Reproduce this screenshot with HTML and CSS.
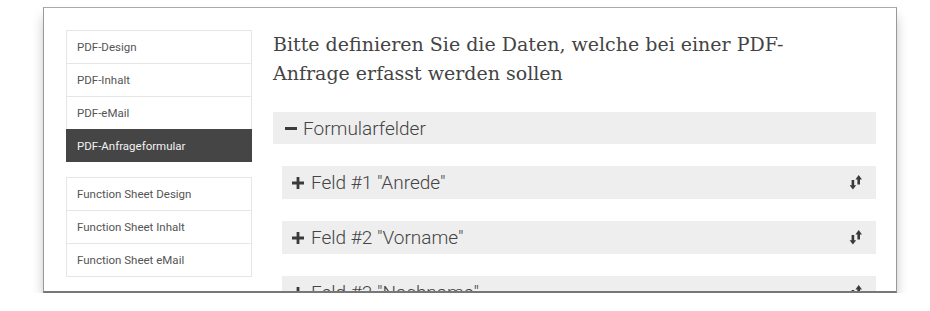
FILE: index.html
```html
<!DOCTYPE html>
<html lang="de">
<head>
    <meta charset="UTF-8">
    <title>PDF-Anfrageformular</title>
    <link rel="stylesheet" href="styles.css">
</head>
<body>
    <div class="window">
        <div class="layout">
            <nav class="sidebar">
                <ul class="menu">
                    <li>PDF-Design</li>
                    <li>PDF-Inhalt</li>
                    <li>PDF-eMail</li>
                    <li class="active">PDF-Anfrageformular</li>
                </ul>
                <ul class="menu">
                    <li>Function Sheet Design</li>
                    <li>Function Sheet Inhalt</li>
                    <li>Function Sheet eMail</li>
                </ul>
            </nav>
            <main class="main">
                <h1 class="title">Bitte definieren Sie die Daten, welche bei einer PDF-<br>Anfrage erfasst werden sollen</h1>
                <div class="group-head">
                    <svg class="ico" width="12" height="12" viewBox="0 0 12 12"><rect x="0" y="5" width="12" height="3" fill="#3a3a3a"/></svg>
                    Formularfelder
                </div>
                <div class="fields">
                    <div class="field">
                        <span class="field-name">
                            <svg class="ico" width="12" height="12" viewBox="0 0 12 12"><path d="M4.6 0h2.8v4.6H12v2.8H7.4V12H4.6V7.4H0V4.6h4.6z" fill="#3a3a3a"/></svg>
                            Feld #1 "Anrede"
                        </span>
                        <svg class="sort" width="14" height="15" viewBox="0 0 14 15"><path d="M2.6 5h2.6v5.2h2L3.9 14.6 0.6 10.2h2z M8.4 9.6h2.6V4.4h2L9.7 0 6.4 4.4h2z" fill="#3a3a3a"/></svg>
                    </div>
                    <div class="field">
                        <span class="field-name">
                            <svg class="ico" width="12" height="12" viewBox="0 0 12 12"><path d="M4.6 0h2.8v4.6H12v2.8H7.4V12H4.6V7.4H0V4.6h4.6z" fill="#3a3a3a"/></svg>
                            Feld #2 "Vorname"
                        </span>
                        <svg class="sort" width="14" height="15" viewBox="0 0 14 15"><path d="M2.6 5h2.6v5.2h2L3.9 14.6 0.6 10.2h2z M8.4 9.6h2.6V4.4h2L9.7 0 6.4 4.4h2z" fill="#3a3a3a"/></svg>
                    </div>
                    <div class="field">
                        <span class="field-name">
                            <svg class="ico" width="12" height="12" viewBox="0 0 12 12"><path d="M4.6 0h2.8v4.6H12v2.8H7.4V12H4.6V7.4H0V4.6h4.6z" fill="#3a3a3a"/></svg>
                            Feld #3 "Nachname"
                        </span>
                        <svg class="sort" width="14" height="15" viewBox="0 0 14 15"><path d="M2.6 5h2.6v5.2h2L3.9 14.6 0.6 10.2h2z M8.4 9.6h2.6V4.4h2L9.7 0 6.4 4.4h2z" fill="#3a3a3a"/></svg>
                    </div>
                </div>
            </main>
        </div>
    </div>
</body>
</html>
```

FILE: styles.css
```css
body {
    margin: 0;
    background: #fff;
    font-family: Roboto, "Liberation Sans", sans-serif;
    color: #555;
}
.window {
    box-sizing: border-box;
    width: 854px;
    height: 286px;
    margin: 7px 0 0 43px;
    border: 1px solid #999;
    border-top-color: #aaa;
    border-bottom: 2px solid #777;
    overflow: hidden;
    background: #fff;
    box-shadow: 0 8px 12px -2px rgba(0, 0, 0, 0.3);
}
.layout {
    display: flex;
    gap: 21px;
    padding: 22px 20px 0 22px;
}
.sidebar {
    flex: 0 0 186px;
    display: flex;
    flex-direction: column;
    gap: 15px;
}
.menu {
    list-style: none;
    margin: 0;
    padding: 0;
    border: 1px solid #e6e6e6;
}
.menu li {
    box-sizing: border-box;
    height: 33px;
    line-height: 32px;
    padding-left: 10px;
    font-size: 11.5px;
    color: #555;
    border-top: 1px solid #e6e6e6;
}
.menu li:first-child {
    border-top: 0;
    height: 32px;
}
.menu li.active {
    background: #454545;
    color: #f2f2f2;
    margin: 0 -1px -1px;
    padding-left: 11px;
    border-top-color: #454545;
}
.main {
    flex: 1;
}
.title {
    margin: 0 0 24px;
    font-family: "DejaVu Serif", serif;
    font-weight: normal;
    font-size: 19px;
    line-height: 29px;
    color: #444;
}
.group-head {
    display: flex;
    align-items: center;
    gap: 6px;
    height: 32px;
    padding-left: 12px;
    background: #eee;
    font-size: 19px;
    font-weight: 300;
    color: #444;
}
.fields {
    display: flex;
    flex-direction: column;
    gap: 22px;
    margin: 22px 0 0 9px;
}
.field {
    display: flex;
    align-items: center;
    justify-content: space-between;
    height: 33px;
    padding: 0 13px 0 10px;
    background: #eee;
    font-size: 19px;
    font-weight: 300;
    color: #444;
}
.field-name {
    display: flex;
    align-items: center;
    gap: 7px;
}
.ico, .sort {
    display: block;
    flex: none;
}
```
